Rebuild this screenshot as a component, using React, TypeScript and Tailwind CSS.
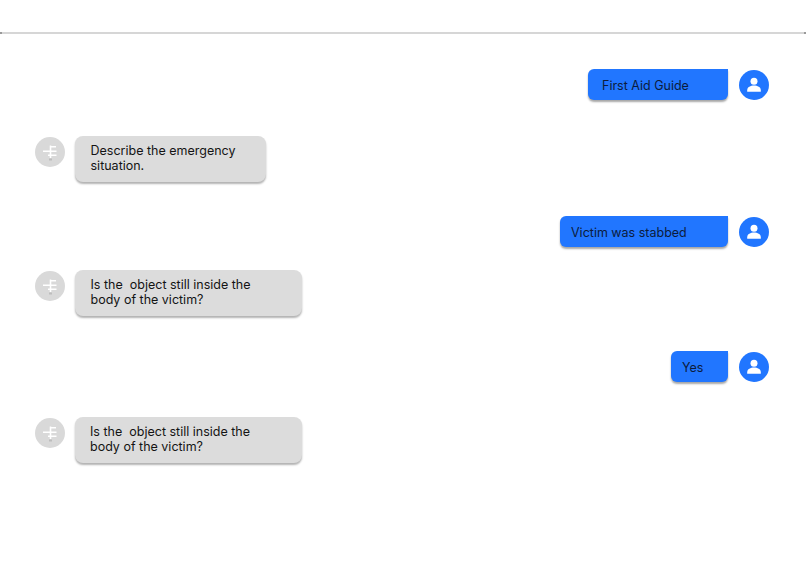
const FONT = "font-['Inter','Liberation_Sans',sans-serif]";

function UserIcon() {
  return (
    <svg width="30" height="30" viewBox="0 0 30 30" aria-hidden="true">
      <circle cx="15" cy="11.2" r="3.5" fill="#fff" />
      <path d="M8.2 21.8v-1.6c0-3 3.4-4.6 6.8-4.6s6.8 1.6 6.8 4.6v1.6z" fill="#fff" />
    </svg>
  );
}

function BotIcon() {
  return (
    <svg width="30" height="30" viewBox="0 0 30 30" aria-hidden="true">
      <path d="M15.5 8.5v12.5" stroke="#fff" strokeWidth="1.6" fill="none" />
      <path d="M15 9.8h6M8 14.2h13.5M13 18.2h8.5" stroke="#fff" strokeWidth="1.6" fill="none" />
      <path d="M14 22.5h3" stroke="#bdbdbd" strokeWidth="2" fill="none" />
    </svg>
  );
}

function UserRow({ text, width, pl, mt }: { text: string; width: string; pl: string; mt: string }) {
  return (
    <div className={`flex items-center justify-end gap-[11px] pr-[37px] ${mt}`}>
      <div
        className={`flex h-[31px] items-center rounded-[6px] rounded-tr-none bg-[#2176ff] pt-[2px] text-[12.5px] leading-[15px] text-[#0c1c3c] shadow-[0_2px_2px_rgba(0,0,0,0.35)] ${width} ${pl}`}
      >
        {text}
      </div>
      <div className="flex h-[30px] w-[30px] items-center justify-center rounded-full bg-[#2176ff]">
        <UserIcon />
      </div>
    </div>
  );
}

function BotRow({ lines, width, mt, pl, ml }: { lines: string[]; width: string; mt: string; pl: string; ml: string }) {
  return (
    <div className={`flex items-start gap-[10px] ${ml} ${mt}`}>
      <div className="mt-px flex h-[30px] w-[30px] items-center justify-center rounded-full bg-[#d9d9d9]">
        <BotIcon />
      </div>
      <div
        className={`flex h-[46px] flex-col justify-center rounded-[8px] bg-[#dcdcdc] pb-[2px] text-[12.5px] leading-[15px] text-[#141414] shadow-[0_2px_2px_rgba(0,0,0,0.3)] ${width} ${pl}`}
      >
        {lines.map((l) => (
          <span key={l} className="whitespace-pre">
            {l}
          </span>
        ))}
      </div>
    </div>
  );
}

export default function App() {
  return (
    <div className={`h-[572px] w-[806px] overflow-hidden bg-white pt-[32px] ${FONT}`}>
      <div className="flex h-[2px] w-full justify-between bg-[#d6d6d6]">
        <div className="h-[2px] w-[2px] bg-[#9a9a9a]" />
        <div className="h-[2px] w-[2px] bg-[#9a9a9a]" />
      </div>
      <UserRow text="First Aid Guide" width="w-[140px]" pl="pl-[14px]" mt="mt-[35px]" />
      <BotRow
        lines={["Describe the emergency", "situation."]}
        width="w-[191px]"
        pl="pl-[15.5px]"
        ml="ml-[35px]"
        mt="mt-[36px]"
      />
      <UserRow text="Victim was stabbed" width="w-[168px]" pl="pl-[11px]" mt="mt-[34px]" />
      <BotRow
        lines={["Is the  object still inside the", "body of the victim?"]}
        width="w-[227px]"
        pl="pl-[15.5px]"
        ml="ml-[35px]"
        mt="mt-[23px]"
      />
      <UserRow text="Yes" width="w-[57px]" pl="pl-[11px]" mt="mt-[35px]" />
      <BotRow
        lines={["Is the  object still inside the", "body of the victim?"]}
        width="w-[227px]"
        pl="pl-[15.5px]"
        ml="ml-[34.5px]"
        mt="mt-[35px]"
      />
    </div>
  );
}
